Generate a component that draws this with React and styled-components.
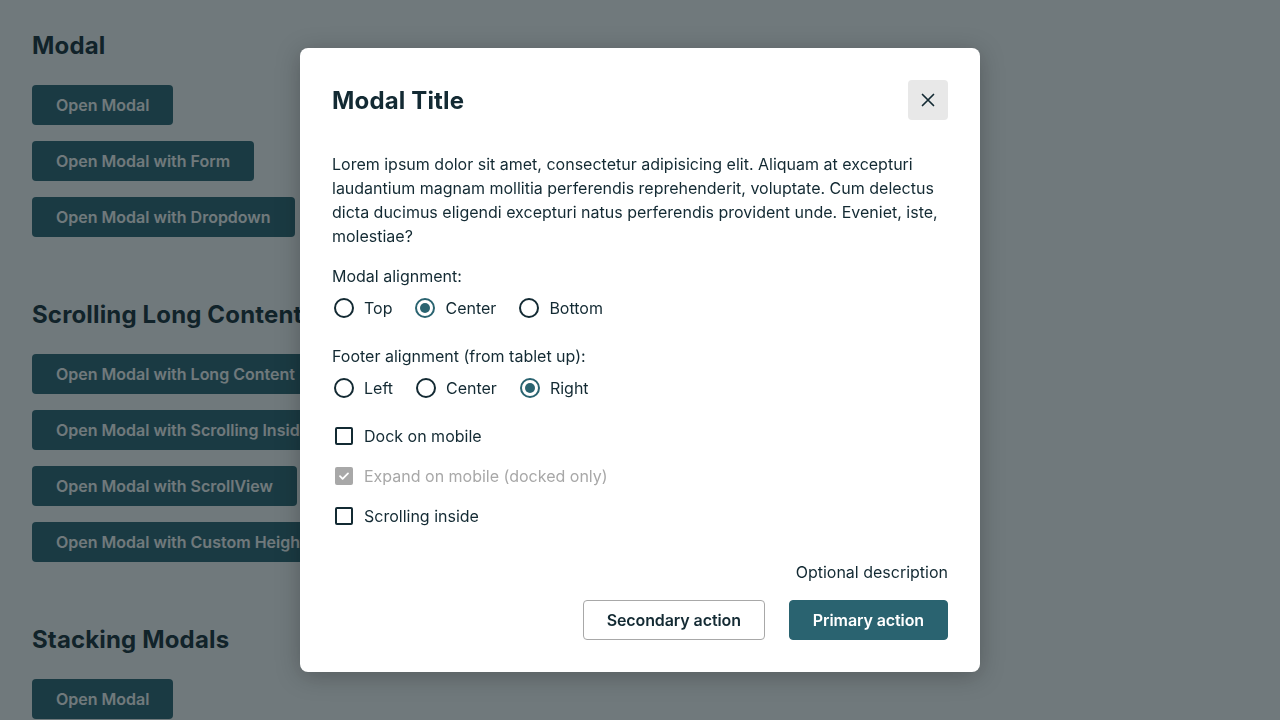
import React from "react";
import styled, { createGlobalStyle } from "styled-components";

const GlobalStyle = createGlobalStyle`
  html, body { margin: 0; padding: 0; background: #ffffff; }
  body { font-family: Inter, "Noto Sans", sans-serif; color: #132a33; }
  * { box-sizing: border-box; }
`;

const Page = styled.main`
  padding: 30px 32px 0;
  height: 720px;
  overflow: hidden;
  display: flex;
  flex-direction: column;
  gap: 62px;
`;

const Section = styled.section`
  display: flex;
  flex-direction: column;
  align-items: flex-start;
  gap: 16px;
`;

const SectionTitle = styled.h2`
  margin: 0 0 7px;
  font-size: 24px;
  line-height: 32px;
  font-weight: 700;
  letter-spacing: 0.15px;
  color: #132a33;
`;

const PageButton = styled.button`
  height: 40px;
  padding: 0 24px;
  border: none;
  border-radius: 4px;
  background: #2a6370;
  color: #ffffff;
  font-family: inherit;
  font-size: 16px;
  font-weight: 600;
  white-space: nowrap;
`;

const Overlay = styled.div`
  position: fixed;
  inset: 0;
  background: rgba(16, 32, 36, 0.6);
  display: flex;
  align-items: center;
  justify-content: center;
`;

const Dialog = styled.div`
  width: 680px;
  height: 624px;
  background: #ffffff;
  border-radius: 8px;
  padding: 32px;
  box-shadow: 0 4px 24px rgba(0, 0, 0, 0.25);
  display: flex;
  flex-direction: column;
`;

const Header = styled.div`
  display: flex;
  align-items: center;
  justify-content: space-between;
  margin-bottom: 32px;
`;

const Title = styled.h1`
  margin: 2px 0 0;
  font-size: 24px;
  line-height: 32px;
  font-weight: 700;
  letter-spacing: 0.15px;
  color: #132a33;
`;

const CloseButton = styled.button`
  width: 40px;
  height: 40px;
  border: none;
  border-radius: 4px;
  background: #e8e8e8;
  display: flex;
  align-items: center;
  justify-content: center;
  padding: 0;
  color: #132a33;
`;

const Body = styled.p`
  margin: 0 0 16px;
  font-size: 16px;
  line-height: 24px;
  color: #132a33;
`;

const Fieldset = styled.div`
  display: flex;
  flex-direction: column;
  gap: 8px;
  margin-bottom: 24px;
`;

const Legend = styled.div`
  font-size: 16px;
  line-height: 24px;
`;

const OptionRow = styled.div`
  display: flex;
  gap: 21px;
`;

const Option = styled.label`
  display: flex;
  align-items: center;
  gap: 10px;
  font-size: 16px;
  line-height: 24px;
  color: ${(p) => (p.$disabled ? "#a8a8a8" : "#132a33")};
`;

const RadioDot = styled.span`
  width: 20px;
  height: 20px;
  margin-left: 2px;
  border-radius: 50%;
  border: 2px solid ${(p) => (p.$checked ? "#2a6370" : "#132a33")};
  display: flex;
  align-items: center;
  justify-content: center;
  &::after {
    content: "";
    width: 10px;
    height: 10px;
    border-radius: 50%;
    background: ${(p) => (p.$checked ? "#2a6370" : "transparent")};
  }
`;

const Checks = styled.div`
  display: flex;
  flex-direction: column;
  gap: 16px;
  margin-bottom: 32px;
`;

const Box = styled.span`
  width: 18px;
  height: 18px;
  margin: 0 1px 0 3px;
  border-radius: 2px;
  border: 2px solid ${(p) => (p.$disabled ? "#a8a8a8" : "#132a33")};
  background: ${(p) => (p.$checked ? (p.$disabled ? "#a8a8a8" : "#2a6370") : "#fff")};
  display: flex;
  align-items: center;
  justify-content: center;
`;

const Footer = styled.div`
  display: flex;
  flex-direction: column;
  align-items: flex-end;
  gap: 16px;
`;

const FooterNote = styled.div`
  font-size: 16px;
  line-height: 24px;
  color: #132a33;
`;

const Actions = styled.div`
  display: flex;
  gap: 24px;
`;

const ActionButton = styled.button`
  height: 40px;
  padding: 0 23px;
  border-radius: 4px;
  font-family: inherit;
  font-size: 16px;
  font-weight: 600;
  letter-spacing: -0.1px;
  border: 1px solid ${(p) => (p.$primary ? "#2a6370" : "#a8a8a8")};
  background: ${(p) => (p.$primary ? "#2a6370" : "#ffffff")};
  color: ${(p) => (p.$primary ? "#ffffff" : "#132a33")};
`;

const sections = [
  { title: "Modal", buttons: ["Open Modal", "Open Modal with Form", "Open Modal with Dropdown"] },
  {
    title: "Scrolling Long Content",
    buttons: [
      "Open Modal with Long Content",
      "Open Modal with Scrolling Inside",
      "Open Modal with ScrollView",
      "Open Modal with Custom Height",
    ],
  },
  { title: "Stacking Modals", buttons: ["Open Modal"] },
];

function Radio({ label, checked }) {
  return (
    <Option>
      <RadioDot $checked={checked} />
      {label}
    </Option>
  );
}

function Check({ label, checked, disabled }) {
  return (
    <Option $disabled={disabled}>
      <Box $checked={checked} $disabled={disabled}>
        {checked && (
          <svg width="12" height="12" viewBox="0 0 12 12" fill="none">
            <path d="M2 6.2l2.6 2.6L10 3.4" stroke="#fff" strokeWidth="1.8" strokeLinecap="round" strokeLinejoin="round" />
          </svg>
        )}
      </Box>
      {label}
    </Option>
  );
}

export default function App() {
  return (
    <>
      <GlobalStyle />
      <Page>
        {sections.map((s) => (
          <Section key={s.title}>
            <SectionTitle>{s.title}</SectionTitle>
            {s.buttons.map((b) => (
              <PageButton key={b}>{b}</PageButton>
            ))}
          </Section>
        ))}
      </Page>

      <Overlay>
        <Dialog>
          <Header>
            <Title>Modal Title</Title>
            <CloseButton aria-label="Close">
              <svg width="16" height="16" viewBox="0 0 16 16" fill="none">
                <path d="M2.5 2.5l11 11M13.5 2.5l-11 11" stroke="currentColor" strokeWidth="1.7" strokeLinecap="round" />
              </svg>
            </CloseButton>
          </Header>

          <Body>
            Lorem ipsum dolor sit amet, consectetur adipisicing elit. Aliquam at excepturi laudantium magnam
            mollitia perferendis reprehenderit, voluptate. Cum delectus dicta ducimus eligendi excepturi natus
            perferendis provident unde. Eveniet, iste, molestiae?
          </Body>

          <Fieldset>
            <Legend>Modal alignment:</Legend>
            <OptionRow>
              <Radio label="Top" />
              <Radio label="Center" checked />
              <Radio label="Bottom" />
            </OptionRow>
          </Fieldset>

          <Fieldset>
            <Legend>Footer alignment (from tablet up):</Legend>
            <OptionRow>
              <Radio label="Left" />
              <Radio label="Center" />
              <Radio label="Right" checked />
            </OptionRow>
          </Fieldset>

          <Checks>
            <Check label="Dock on mobile" />
            <Check label="Expand on mobile (docked only)" checked disabled />
            <Check label="Scrolling inside" />
          </Checks>

          <Footer>
            <FooterNote>Optional description</FooterNote>
            <Actions>
              <ActionButton>Secondary action</ActionButton>
              <ActionButton $primary>Primary action</ActionButton>
            </Actions>
          </Footer>
        </Dialog>
      </Overlay>
    </>
  );
}
